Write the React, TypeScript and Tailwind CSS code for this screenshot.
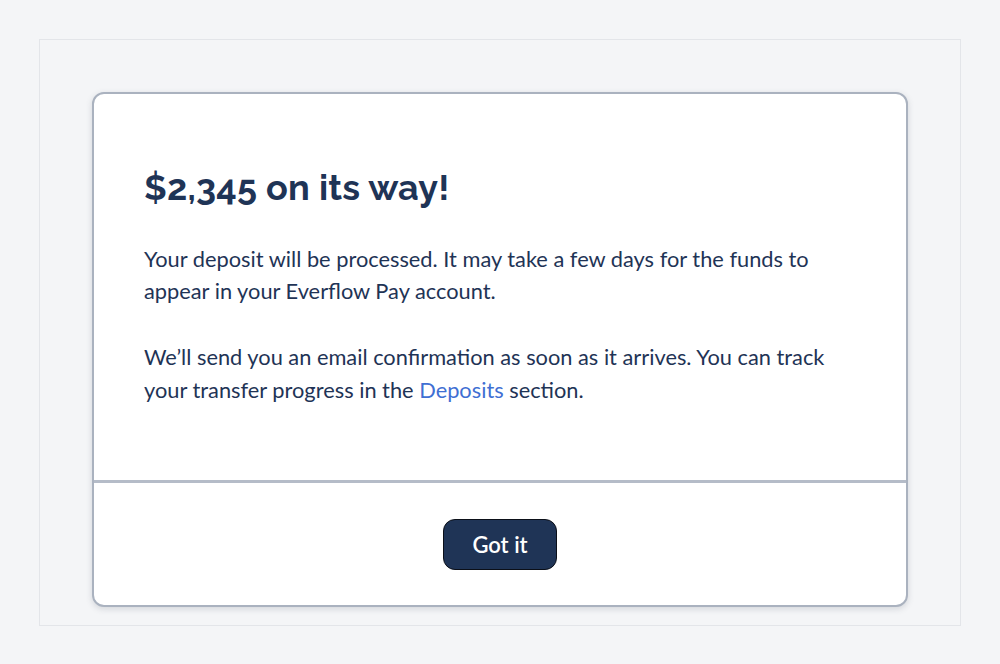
import React from 'react';

const App: React.FC = () => {
  return (
    <div className="min-h-[664px] bg-[#f4f5f7] p-[39px]" style={{ fontFamily: 'Lato, "Noto Sans", sans-serif' }}>
      <div className="border border-[#e3e5e9] bg-[#f4f5f7] px-[52px] pt-[52px] pb-[18px]">
        <div className="rounded-[12px] border-2 border-[#aab2bf] bg-white shadow-[0_2px_6px_rgba(60,70,90,0.18)] overflow-hidden">
          <div className="px-[50px] pt-[75px] pb-[74px]">
            <h1
              className="text-[36px] font-bold leading-none text-[#1f3456] tracking-[0.2px]"
              style={{ fontFamily: 'Raleway, Lato, "Noto Sans", sans-serif' }}
            >
              $2,345 on its way!
            </h1>
            <p className="mt-[38px] max-w-[700px] text-[21.8px] leading-[32px] text-[#1f3456]">
              Your deposit will be processed. It may take a few days for the funds to appear in your Everflow Pay account.
            </p>
            <p className="mt-[33px] max-w-[700px] text-[21.8px] leading-[33px] text-[#1f3456]">
              We’ll send you an email confirmation as soon as it arrives. You can track your transfer progress in the{' '}
              <a className="text-[#3f6fd3]" href="#">Deposits</a> section.
            </p>
          </div>
          <div className="h-[3px] bg-[#b5bcc8]" />
          <div className="flex justify-center pt-[36px] pb-[35px]">
            <button className="h-[51px] w-[114px] rounded-[12px] border-[1.5px] border-[#0b0f18] bg-[#1f3456] text-[22px] font-semibold text-white">
              Got it
            </button>
          </div>
        </div>
      </div>
    </div>
  );
};

export default App;
